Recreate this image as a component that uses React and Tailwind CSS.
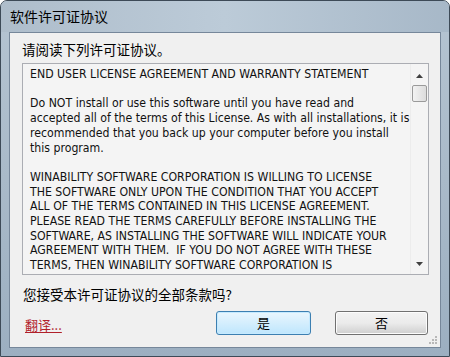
import React from 'react'

const cjk = { fontFamily: '"Noto Sans CJK SC", "Microsoft YaHei", sans-serif' }

const paragraphs = [
  ['END USER LICENSE AGREEMENT AND WARRANTY STATEMENT'],
  [
    'Do NOT install or use this software until you have read and',
    'accepted all of the terms of this License. As with all installations, it is',
    'recommended that you back up your computer before you install',
    'this program.',
  ],
  [
    'WINABILITY SOFTWARE CORPORATION IS WILLING TO LICENSE',
    'THE SOFTWARE ONLY UPON THE CONDITION THAT YOU ACCEPT',
    'ALL OF THE TERMS CONTAINED IN THIS LICENSE AGREEMENT.',
    'PLEASE READ THE TERMS CAREFULLY BEFORE INSTALLING THE',
    'SOFTWARE, AS INSTALLING THE SOFTWARE WILL INDICATE YOUR',
    'AGREEMENT WITH THEM.  IF YOU DO NOT AGREE WITH THESE',
    'TERMS, THEN WINABILITY SOFTWARE CORPORATION IS',
  ],
]

const Scrollbar = () => (
  <div className="w-[18px] flex flex-col bg-[#f4f4f4] border-l border-[#ececec]">
    <div className="h-[21px] flex items-center justify-center pt-[3px]">
      <svg width="7" height="4" viewBox="0 0 7 4"><path d="M0 4 L3.5 0 L7 4 Z" fill="#404040" /></svg>
    </div>
    <div className="h-[17px] mx-[1px] rounded-[2px] border border-[#9a9a9a] bg-gradient-to-r from-[#f2f2f2] to-[#dcdcdc]" />
    <div className="flex-1" />
    <div className="h-[20px] flex items-center justify-center">
      <svg width="7" height="4" viewBox="0 0 7 4"><path d="M0 0 L7 0 L3.5 4 Z" fill="#404040" /></svg>
    </div>
  </div>
)

export default function App() {
  return (
    <div className="w-[450px] h-[357px] flex flex-col rounded-t-[7px] border border-[#3d4a57] bg-gradient-to-b from-[#b5c4d2] via-[#a9bac9] to-[#9cafc1] overflow-hidden">
      <div className="h-[32px] flex items-center pl-[9px] text-[14px] text-black bg-gradient-to-r from-[#aebdcb] via-[#bccbd8] to-[#a7b8c8]" style={cjk}>
        软件许可证协议
      </div>
      <div className="flex-1 mx-[8px] mb-[8px] flex flex-col bg-[#f0f0f0] border border-[#76879a]">
        <div className="h-[30px] flex items-center pl-[12px] pt-[3px] text-[13.5px] text-black" style={cjk}>
          请阅读下列许可证协议。
        </div>
        <div className="ml-[12px] w-[407px] h-[212px] flex border border-[#abadb3] bg-[#f4f4f4] overflow-hidden">
          <div className="flex-1 pl-[7px] pt-[3px] text-[12.2px] leading-[14.7px] text-[#111]" style={{ fontFamily: '"DejaVu Sans Condensed", Tahoma, "Liberation Sans", sans-serif' }}>
            {paragraphs.map((p, i) => (
              <div key={i} className="mb-[14.7px]">
                {p.map((l, j) => (
                  <div key={j} className="whitespace-pre">{l}</div>
                ))}
              </div>
            ))}
          </div>
          <Scrollbar />
        </div>
        <div className="h-[36px] flex items-center pl-[13px] text-[13.5px] text-black pt-[2px]" style={cjk}>
          您接受本许可证协议的全部条款吗?
        </div>
        <div className="flex items-start pl-[15px] pr-[12px]">
          <span className="mt-[4px] text-[13px] text-[#b0202a] underline underline-offset-2" style={cjk}>翻译...</span>
          <div className="ml-auto flex gap-[24px]">
            <button className="w-[95px] h-[24px] rounded-[3px] border border-[#3c7fb1] bg-gradient-to-b from-[#eaf6fd] to-[#bee6fd] text-[13px] text-black flex items-center justify-center shadow-[inset_0_0_0_1px_#c5eaff]" style={cjk}>
              是
            </button>
            <button className="w-[93px] h-[24px] rounded-[3px] border border-[#707070] bg-gradient-to-b from-[#f2f2f2] via-[#ebebeb] to-[#cfcfcf] text-[13px] text-black flex items-center justify-center shadow-[inset_0_0_0_1px_#fcfcfc]" style={cjk}>
              否
            </button>
          </div>
        </div>
        <div className="flex-1 flex items-end justify-end pr-[2px] pb-[2px]">
          <svg width="10" height="10" viewBox="0 0 10 10">
            <rect x="7" y="1" width="2" height="2" fill="#b8b8b8" />
            <rect x="4" y="4" width="2" height="2" fill="#b8b8b8" />
            <rect x="7" y="4" width="2" height="2" fill="#b8b8b8" />
            <rect x="1" y="7" width="2" height="2" fill="#b8b8b8" />
            <rect x="4" y="7" width="2" height="2" fill="#b8b8b8" />
            <rect x="7" y="7" width="2" height="2" fill="#b8b8b8" />
          </svg>
        </div>
      </div>
    </div>
  )
}
